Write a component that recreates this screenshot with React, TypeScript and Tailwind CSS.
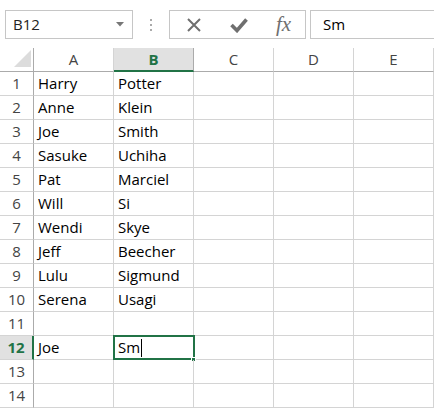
const COLS = ["A", "B", "C", "D", "E"];

const DATA: [string, string][] = [
  ["Harry", "Potter"],
  ["Anne", "Klein"],
  ["Joe", "Smith"],
  ["Sasuke", "Uchiha"],
  ["Pat", "Marciel"],
  ["Will", "Si"],
  ["Wendi", "Skye"],
  ["Jeff", "Beecher"],
  ["Lulu", "Sigmund"],
  ["Serena", "Usagi"],
  ["", ""],
  ["Joe", "Sm"],
  ["", ""],
  ["", ""],
];

function FormulaBar() {
  return (
    <div className="flex h-12 items-center bg-white pt-px">
      <div className="ml-[5px] flex h-[29px] w-[128px] items-center justify-between border border-[#c6c6c6] pl-[7px] pr-[8px]">
        <span className="text-[15px] text-[#222]">B12</span>
        <svg width="8" height="5" viewBox="0 0 8 5">
          <path d="M0 0h8L4 4.5z" fill="#777" />
        </svg>
      </div>
      <div className="ml-[17px] flex w-[2px] flex-col gap-[3px]">
        <span className="h-[2px] w-[2px] bg-[#aaa]" />
        <span className="h-[2px] w-[2px] bg-[#aaa]" />
        <span className="h-[2px] w-[2px] bg-[#aaa]" />
      </div>
      <div className="ml-[17px] flex h-[29px] w-[137px] items-center border border-[#c6c6c6]">
        <div className="flex w-[46px] justify-center pl-[1px]">
          <svg width="16" height="16" viewBox="0 0 16 16">
            <path d="M2 2l12 12M14 2L2 14" stroke="#6f6f6f" strokeWidth="2" />
          </svg>
        </div>
        <div className="flex w-[46px] justify-center">
          <svg width="18" height="16" viewBox="0 0 18 16">
            <path d="M1.5 8l5.5 5.5L16.5 2.5" stroke="#6f6f6f" strokeWidth="3.6" fill="none" />
          </svg>
        </div>
        <div className="flex w-[43px] justify-center">
          <span className="font-['Liberation_Serif',serif] text-[21px] italic leading-none text-[#6f6f6f]">
            fx
          </span>
        </div>
      </div>
      <div className="ml-[4px] flex h-[29px] flex-1 items-center border border-r-0 border-[#c6c6c6] pl-[12px]">
        <span className="text-[15px] text-black">Sm</span>
      </div>
    </div>
  );
}

function HeaderRow() {
  return (
    <div className="flex h-6">
      <div className="relative w-[34px] border-b border-r border-[#ababab]">
        <svg className="absolute bottom-[4px] right-[2px]" width="17" height="17" viewBox="0 0 17 17">
          <path d="M17 0V17H0z" fill="#dcdcdc" />
        </svg>
      </div>
      {COLS.map((c) => {
        const sel = c === "B";
        return (
          <div
            key={c}
            className={`flex w-[80px] items-center justify-center border-r ${
              sel
                ? "border-b-2 border-r-[#ababab] border-b-[#217346] bg-[#e1e1e1] font-bold text-[#217346]"
                : "border-b border-[#ababab] border-r-[#d4d4d4] text-[#444]"
            }`}
          >
            <span className="text-[15px]">{c}</span>
          </div>
        );
      })}
    </div>
  );
}

function Row({ n, a, b }: { n: number; a: string; b: string }) {
  const sel = n === 12;
  return (
    <div className="flex h-6">
      <div
        className={`flex w-[34px] items-center justify-center border-b border-b-[#d4d4d4] ${
          sel
            ? "border-r-2 border-r-[#217346] bg-[#e1e1e1] font-bold text-[#217346]"
            : "border-r border-r-[#ababab] text-[#444]"
        }`}
      >
        <span className="text-[15px]">{n}</span>
      </div>
      <div className="flex w-[80px] items-end border-b border-r border-[#d4d4d4] pb-[1px] pl-[4px]">
        {a}
      </div>
      <div className="relative flex w-[80px] items-end border-b border-r border-[#d4d4d4] pb-[1px] pl-[4px]">
        {b}
        {sel && (
          <>
            <span className="mb-[1px] ml-px h-[18px] w-px bg-black" />
            <div className="absolute -left-[1px] -top-[1px] h-[25px] w-[82px] border-2 border-[#217346]" />
            <div className="absolute -bottom-[3px] -right-[3px] h-[5px] w-[5px] border border-white bg-[#217346]" />
          </>
        )}
      </div>
      <div className="w-[80px] border-b border-r border-[#d4d4d4]" />
      <div className="w-[80px] border-b border-r border-[#d4d4d4]" />
      <div className="w-[80px] border-b border-r border-[#d4d4d4]" />
    </div>
  );
}

export default function App() {
  return (
    <div className="h-[408px] w-[434px] overflow-hidden bg-white font-['Open_Sans',sans-serif] text-[15px] text-black">
      <FormulaBar />
      <HeaderRow />
      {DATA.map(([a, b], i) => (
        <Row key={i} n={i + 1} a={a} b={b} />
      ))}
    </div>
  );
}
